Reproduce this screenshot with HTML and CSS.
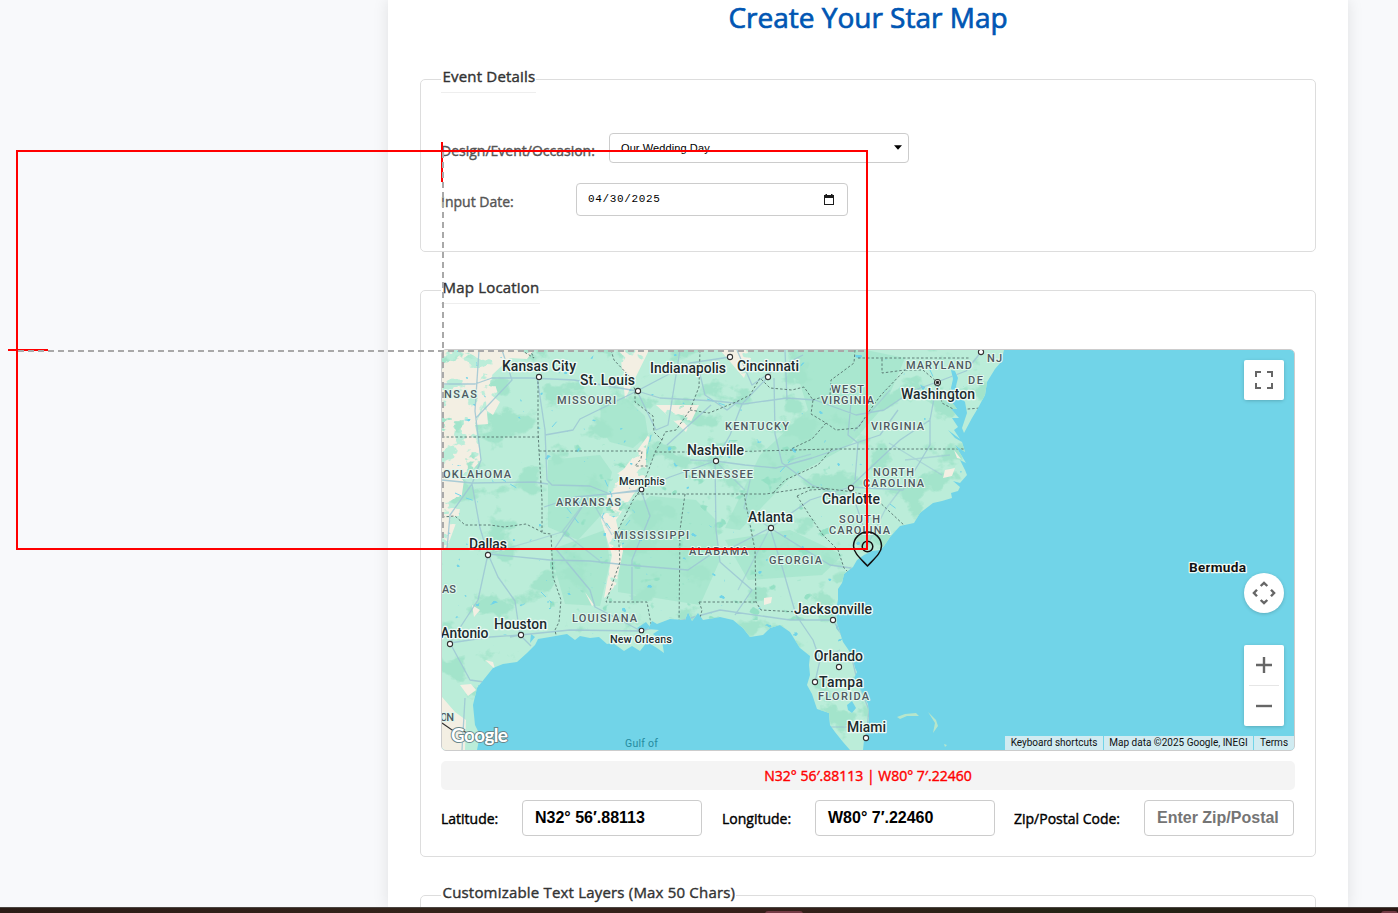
FILE: index.html
```html
<!DOCTYPE html>
<html lang="en">
<head>
<meta charset="utf-8">
<title>Create Your Star Map</title>
<link rel="stylesheet" href="styles.css">
</head>
<body>
<div class="viewport">
<main class="card">
  <h1><span>Create Your Star Map</span></h1>
  <fieldset class="group event">
    <legend class="l-event">Event Details</legend>
    <div class="row row-occasion">
      <label class="t-occasion">Design/Event/Occasion:</label>
      <div class="control select"><span>Our Wedding Day</span><svg width="8" height="5" viewBox="0 0 8 5"><path d="M0 .3H8L4 4.7Z"/></svg></div>
    </div>
    <div class="row row-date">
      <label class="t-date">Input Date:</label>
      <div class="control date"><span>04/30/2025</span><svg width="10" height="11" viewBox="0 0 10 11"><path fill-rule="evenodd" d="M1.5 0H3V1H7V0H8.500V1H10V11H0V1H1.500ZM1 4V10H9V4Z" fill="#1c1c1c"/></svg></div>
    </div>
  </fieldset>
  <fieldset class="group location">
    <legend class="l-map">Map Location</legend>
    <div class="map">
      <svg class="canvas" width="852" height="400" viewBox="442 350 852 400">
        <defs>
          <path id="coast" d="M442 350H1004L1001 362 995 369 987 382 985 395 978 408 972 418 964 433 962 428 967 413 965 402 958 394 956 386 958 378 955 371 951 370 953 379 951 388 953 396 950 400 957 409 951 409 959 418 952 418 958 427 954 430 960 439 948 430 955 438 962 442 965 452 955 445 966 463 960 460 965 470 967 475 960 483 953 481 960 487 958 491 951 493 952 498 942 501 933 503 920 513 914 523 900 526 890 537 884 546 880 550 872 551 864 555 857 560 853 567 844 574 842 583 838 589 838 600 836 610 837 623 843 642 852 655 855 668 857 672 854 678 862 692 868 704 869 716 868 728 864 740 863 750H850L843 742 835 732 830 725 829 713 817 709 812 694 807 685 810 675 809 665 810 656 800 648 790 632 780 625 770 628 763 635 750 637 743 628 733 620 720 617 703 620 698 613 692 621 688 612 685 620 670 619 657 624 652 621 648 629 659 630 653 634 662 641 664 653 657 648 647 642 640 651 632 646 624 651 613 643 607 644 599 637 590 638 580 636 575 640 567 634 550 637 538 639 535 645 527 653 517 662 503 664 493 668 485 678 477 688 473 705 475 725 480 735 477 750H442Z"/>
          <clipPath id="land"><use href="#coast"/></clipPath>
          <clipPath id="plains"><path d="M442 350H534L527 359 510 358 492 375 499 397 484 402 475 424 481 460 464 480 459 515 448 545 442 551ZM620 350H649L625 399ZM656 405H699L686 432ZM652 430 624 469 605 482 601 520 612 555 604 598 615 590 623 551 616 520 646 476 646 450ZM720 350H754L744 378Z"/></clipPath>
          <filter id="woods" x="0" y="0" width="100%" height="100%" color-interpolation-filters="sRGB"><feTurbulence type="fractalNoise" baseFrequency=".027 .034" numOctaves="5" seed="12"/><feColorMatrix values="0 0 0 0 .64  0 0 0 0 .895  0 0 0 0 .795  12 0 0 0 -7"/></filter>
          <filter id="forest" x="0" y="0" width="100%" height="100%" color-interpolation-filters="sRGB"><feTurbulence type="fractalNoise" baseFrequency=".055 .07" numOctaves="3" seed="5"/><feColorMatrix values="0 0 0 0 .58  0 0 0 0 .88  0 0 0 0 .77  14 0 0 0 -9.7"/></filter>
          <filter id="dry" x="0" y="0" width="100%" height="100%" color-interpolation-filters="sRGB"><feTurbulence type="fractalNoise" baseFrequency=".045 .06" numOctaves="4" seed="8"/><feColorMatrix values="0 0 0 0 .953  0 0 0 0 .937  0 0 0 0 .89  22 0 0 0 -9"/></filter>
          <filter id="ponds" x="0" y="0" width="100%" height="100%" color-interpolation-filters="sRGB"><feTurbulence type="fractalNoise" baseFrequency=".11 .13" numOctaves="2" seed="21"/><feColorMatrix values="0 0 0 0 .44  0 0 0 0 .83  0 0 0 0 .91  20 0 0 0 -15.4"/></filter>
        </defs>
        <rect x="442" y="350" width="852" height="400" fill="#71d4e8"/>
        <use href="#coast" fill="#bbedd9"/>
        <g clip-path="url(#land)">
          <path class="wood" d="M601 402 625 397 645 416 648 435 633 448 610 442 600 428ZM548 460 600 455 612 472 602 514 578 540 548 527ZM620 525 650 496 696 500 716 520 720 560 700 605 618 592ZM550 550 605 530 610 562 600 606 565 604ZM790 350H866L905 358 885 405 850 445 790 478 740 530 725 528 760 455 808 410ZM725 540 790 530 843 555 822 575 748 580Z"/>
          <rect x="442" y="350" width="570" height="400" filter="url(#woods)"/>
          <rect x="550" y="440" width="280" height="180" filter="url(#forest)"/>
          <g clip-path="url(#plains)"><rect x="442" y="350" width="420" height="260" filter="url(#dry)"/></g>
          <path class="sand" d="M485 390 500 402 493 415 483 408 475 425 488 424ZM472 605 480 610 474 617ZM485 660 493 662 495 669ZM460 685 471 684 476 690 468 696ZM442 697 455 712 466 720 465 750H442ZM764 598 772 597 771 603 764 605ZM823 712 829 716 827 720ZM945 470 955 468 952 476 943 478ZM954 450 961 459 957 458ZM585 592 594 605 592 606Z"/>
          <rect x="442" y="350" width="530" height="300" filter="url(#ponds)"/>
          <path class="lake" d="M847 705 852 701 856 708 852 713 848 710ZM637 628 646 622 650 627 643 632ZM837 622 839 632 836 628ZM531 634 535 637 530 643ZM478 685 484 689 479 696Z"/>
          <path class="river" d="M455 493 466 498 478 502M500 478 520 490M541 592 552 603M567 508 580 525M605 480 612 496 602 517 615 535M651 435 646 460M707 399 730 407M730 440 720 461M842 597 848 603M858 575 866 582M890 504 898 510M630 520 614 541M552 427 559 419M780 472 790 461M930 370 937 385 949 404"/>
          <path class="road" d="M442 384H475L492 378H530L574 380 608 386 637 391 660 398 715 401 744 404 787 398 815 400 856 415 884 410 912 391 937 382 966 371 981 352M537 377 545 430 547 480 552 485 590 486 610 494 640 490 670 477 715 461 745 465 776 468 812 458 850 445 880 435 898 410M545 435 573 430 580 419 637 391 690 363 730 357M479 350 475 411 481 460 472 484 450 515 447 549M502 350 512 380 476 418M442 480 472 483 534 482 548 484M472 484 480 528 488 554 478 600 450 643 470 680 484 682M488 554 550 560 590 561 627 565 688 570 710 555 727 550 770 528 810 500 850 487 900 440 930 420 937 382M488 554 498 577 515 601 520 635 531 646M450 643 490 637 520 635 570 630 641 631 676 622 720 610 790 620 833 620M588 498 555 548 590 590 595 607 641 631M637 391 656 430 668 425 680 350M641 490 650 516 632 560 632 600M715 461 716 530 720 562 752 590 735 615M768 377 742 404 730 435 715 461M770 528 783 570 796 615 813 640 820 660 815 682M833 620 850 650 857 680 869 710 866 738M770 528 830 565 851 568 844 600 833 620M737 350 752 385 774 370 803 355M850 487 868 540M850 487 903 490 930 445 930 418M851 402 848 435 858 443 855 480M774 378 775 434 782 463 812 485 847 498M667 445 711 405M699 370 705 395 727 410 740 400M510 637 520 635M462 750 465 698M785 350 787 400M640 491 575 497 544 507"/>
          <path class="road soft" d="M488 554 536 540 562 532 588 498M563 532 600 561M590 498 612 535M690 460 715 461 745 490M790 460 811 454M854 431 890 390M900 490 885 510 866 548M905 460 950 455M889 443 942 475M751 476 744 508 770 528 738 590M820 658 840 650M828 727H866"/>
          <path class="state" d="M442 437H539M538 377V430L539 451 542 500 542 533 551 534 553 577 561 600 559 622 555 630 557 640M539 451H642L641 459 635 466 648 466M521 350 534 358 530 350M611 350 614 360 630 377 635 390 635 402 653 416 654 432 662 440 655 452 649 469 641 489 633 500 618 530 620 562 615 576 606 602H647L651 624M655 452H724L830 449H966M637 494H766L812 487 830 489M685 494 680 530 679 625M744 494 755 550 756 602 761 610 836 614M699 602H756M699 602 702 610 699 622M700 350 699 387 690 410 676 430 665 432 662 440M690 410 709 413 736 402 750 395 760 378 770 388 792 390 804 387 813 400 811 414 826 423 812 439 791 449M826 423 836 430 858 428 870 410 881 395 905 370 882 373V358M855 350 854 363 842 372 831 380 830 395 812 400M858 358H970M905 370 923 370 937 382 942 403 955 410 981 408M832 449 818 465 785 480 773 493M797 496 810 516 823 535 838 550 844 568 851 575M797 496 810 490 830 489 846 491 868 495M875 498 905 526M442 517 455 516 465 525 490 525 504 527 526 524 542 532"/>
          <path class="frontier" d="M442 723 452 730 460 730 476 736 481 734"/>
        </g>
        <path d="M897 717 905 714 916 713 919 716 907 716 900 719ZM928 712 936 720 938 726 933 733 935 723ZM944 744 947 745 945 747Z" fill="#b6e6cb"/>
        <g class="state-name">
          <text x="444" y="398" textLength="33">NSAS</text><text x="557" y="404" textLength="59">MISSOURI</text>
          <text x="443" y="478" textLength="68">OKLAHOMA</text><text x="556" y="506" textLength="65">ARKANSAS</text>
          <text x="614" y="539" textLength="75">MISSISSIPPI</text><text x="689" y="555" textLength="59">ALABAMA</text>
          <text x="769" y="564" textLength="53">GEORGIA</text><text x="572" y="622" textLength="65">LOUISIANA</text>
          <text x="683" y="478" textLength="70">TENNESSEE</text><text x="725" y="430" textLength="64">KENTUCKY</text>
          <text x="831" y="393" textLength="33">WEST</text><text x="821" y="404" textLength="53">VIRGINIA</text>
          <text x="871" y="430" textLength="53">VIRGINIA</text><text x="906" y="369" textLength="66">MARYLAND</text>
          <text x="968" y="384" textLength="15">DE</text><text x="987" y="362" textLength="15">NJ</text>
          <text x="873" y="476" textLength="41">NORTH</text><text x="863" y="487" textLength="61">CAROLINA</text>
          <text x="839" y="523" textLength="41">SOUTH</text><text x="829" y="534" textLength="61">CAROLINA</text>
          <text x="818" y="700" textLength="51">FLORIDA</text><text x="442" y="593" textLength="14">AS</text><text x="440" y="721" textLength="14">ON</text>
        </g>
        <g class="city">
          <text x="502" y="371" textLength="74">Kansas City</text><text x="580" y="385" textLength="55">St. Louis</text>
          <text x="650" y="373" textLength="76">Indianapolis</text><text x="737" y="371" textLength="62">Cincinnati</text>
          <text x="901" y="399" textLength="74">Washington</text><text x="687" y="455" textLength="57">Nashville</text>
          <text x="822" y="504" textLength="58">Charlotte</text><text x="748" y="522" textLength="45">Atlanta</text>
          <text x="469" y="549" textLength="38">Dallas</text><text x="494" y="629" textLength="53">Houston</text>
          <text x="440.500" y="638" textLength="48">Antonio</text><text x="794" y="614" textLength="78">Jacksonville</text>
          <text x="814" y="661" textLength="49">Orlando</text><text x="819" y="687" textLength="44">Tampa</text><text x="847" y="732" textLength="39">Miami</text>
          <text class="minor" x="619" y="485" textLength="46">Memphis</text><text class="minor" x="610" y="643" textLength="62">New Orleans</text>
          <text class="island" x="1189" y="572" textLength="57">Bermuda</text>
        </g>
        <text class="gulf" x="625" y="747" textLength="33">Gulf of</text>
        <g class="dot"><circle cx="539" cy="377" r="2.600"/><circle cx="638" cy="391" r="2.600"/><circle cx="730" cy="357" r="2.600"/><circle cx="768" cy="377" r="2.600"/><circle cx="981" cy="352" r="2.600"/><circle cx="716" cy="461" r="2.600"/><circle cx="641.500" cy="489.500" r="2.300"/><circle cx="851" cy="488" r="2.600"/><circle cx="771" cy="528" r="2.600"/><circle cx="488" cy="555" r="2.600"/><circle cx="521" cy="635" r="2.600"/><circle cx="450" cy="644" r="2.600"/><circle cx="641.500" cy="630.500" r="2.300"/><circle cx="833" cy="620" r="2.600"/><circle cx="839" cy="667" r="2.600"/><circle cx="815" cy="682" r="2.600"/><circle cx="866" cy="738" r="2.600"/><circle cx="937.500" cy="382.500" r="3"/><circle cx="937.500" cy="382.500" r="1.200" class="core"/></g>
        <path d="M867.500 566C861 559 853.500 553 853.500 546A14 14 0 0 1 881.500 546C881.500 553 874 559 867.500 566Z" fill="none" stroke="#111" stroke-width="1.500"/>
        <circle cx="867.500" cy="546.500" r="5.300" fill="none" stroke="#111" stroke-width="1.500"/>
        <text class="brand" x="451" y="742" textLength="57">Google</text>
      </svg>
      <div class="btn full"><svg width="18" height="18" viewBox="0 0 18 18"><path d="M1 6V1H6M12 1H17V6M17 12V17H12M6 17H1V12"/></svg></div>
      <div class="btn pan"><svg width="24" height="24" viewBox="0 0 24 24"><path d="M8.700 5 12 1.900 15.300 5M19 8.700 22.100 12 19 15.300M15.300 19 12 22.100 8.700 19M5 15.300 1.900 12 5 8.700"/></svg></div>
      <div class="btn zoom"><svg width="18" height="18" viewBox="0 0 18 18"><path d="M9 1V17M1 9H17"/></svg><i></i><svg width="18" height="18" viewBox="0 0 18 18"><path d="M1 9H17"/></svg></div>
      <div class="credits"><span class="c1">Keyboard shortcuts</span><span class="c2">Map data ©2025 Google, INEGI</span><span class="c3">Terms</span></div>
    </div>
    <div class="coords"><span>N32° 56′.88113 | W80° 7′.22460</span></div>
    <div class="fields">
      <label class="t-lat">Latitude:</label><div class="control value">N32° 56′.88113</div>
      <label class="t-lon">Longitude:</label><div class="control value">W80° 7′.22460</div>
      <label class="t-zip">Zip/Postal Code:</label><div class="control value hint">Enter Zip/Postal</div>
    </div>
  </fieldset>
  <fieldset class="group layers"><legend class="l-layers">Customizable Text Layers (Max 50 Chars)</legend></fieldset>
</main>
<footer class="strip"><i class="blob b1"></i><i class="blob b2"></i></footer>
<svg class="guides" width="1398" height="913" viewBox="0 0 1398 913" fill="none" stroke-width="2">
  <path d="M8 350H48M442 142V182" stroke="#f00"/>
  <path d="M18 351H866M443 152V549" stroke="#a9a9a9" stroke-dasharray="6 4"/>
  <rect x="17" y="151" width="850" height="398" stroke="#f00"/>
</svg>
</div>
</body>
</html>
```
FILE: styles.css
```css
* { box-sizing: border-box; }
body { margin: 0; background: #f8f9fb; font-family: "Open Sans", sans-serif; color: #333; }
.viewport { position: relative; height: 913px; overflow: hidden; display: flex; flex-direction: column; }
.card { width: 960px; height: 907px; flex: none; margin-left: 388px; padding: 0 32px; background: #fff; box-shadow: 0 0 15px rgba(0,0,0,.1); overflow: visible; }
h1 { margin: 0 0 31px; height: 35px; line-height: 35px; font-size: 28px; font-weight: 500; color: #0056b3; text-align: center; white-space: nowrap; -webkit-text-stroke: .7px; }
.group { margin: 0 0 25px; padding: 0 20px; border: 1px solid #ddd; border-radius: 5px; min-width: 0; }
.event { height: 186px; }
.location { height: 580px; }
.layers { height: 60px; margin: 0; }
legend { height: 27px; padding: 0 1px 0 1.500px; border-bottom: 1px solid #eee; font-size: 15px; line-height: 21px; font-weight: 500; letter-spacing: .19px; white-space: nowrap; -webkit-text-stroke: .4px; }
.row { display: flex; align-items: center; color: #555; font-size: 14px; font-weight: 500; white-space: nowrap; }
.row label, .fields label, .coords { -webkit-text-stroke: .4px; }
.row-occasion { margin-top: 40px; height: 30px; }
.row-occasion label { width: 168px; padding-top: 4px; }
.row-date { margin-top: 20px; height: 33px; }
.row-date label { width: 135px; padding-top: 3px; }
.control { display: flex; align-items: center; justify-content: space-between; background: #fff; border: 1px solid #ccc; border-radius: 4px; color: #000; }
.select { width: 300px; height: 30px; padding: 0 6px 1px 11px; font: 11px "Liberation Sans", sans-serif; letter-spacing: .1px; }
.date { width: 272px; height: 33px; padding: 0 13px 0 11px; font: 11px "Liberation Mono", monospace; letter-spacing: .65px; }
.date span { padding-bottom: 1px; }
.map { position: relative; margin-top: 45px; height: 402px; border: 1px solid #ccc; border-radius: 5px; overflow: hidden; font-family: Roboto, sans-serif; }
.canvas { display: block; }
.wood { fill: #a6e5cd; opacity: .85; }
.sand { fill: #f3efe3; }
.lake { fill: #71d4e8; }
.river { fill: none; stroke: #71d4e8; stroke-width: 1; stroke-dasharray: 7 5; }
.road { fill: none; stroke: #9cc6d3; stroke-width: 1.300; stroke-linejoin: round; opacity: .85; }
.soft { opacity: .6; }
.state { fill: none; stroke: #56736e; stroke-width: .9; stroke-dasharray: 2.500 2; }
.frontier { fill: none; stroke: #333; stroke-width: 1.200; }
.state-name text { font-size: 11px; font-weight: 500; fill: #4f5960; stroke: #e0f7ee; stroke-width: 2.200px; paint-order: stroke; stroke-linejoin: round; }
.city text { font-size: 14px; font-weight: 500; fill: #202a2e; stroke: #edfaf5; stroke-width: 2.600px; paint-order: stroke; stroke-linejoin: round; }
.city .minor { font-size: 11px; }
.city .island { font-size: 13.700px; font-weight: 700; fill: #111; }
.gulf { font-size: 10.500px; fill: #258ba0; }
.dot circle { fill: #fff; stroke: #333; stroke-width: 1.100; }
.dot .core { fill: #111; }
.brand { font-family: Lato, sans-serif; font-size: 19px; font-weight: 700; fill: #fff; stroke: #68878a; stroke-width: 2px; paint-order: stroke; }
.btn { position: absolute; right: 10px; width: 40px; height: 40px; display: flex; align-items: center; justify-content: center; background: #fff; border-radius: 2px; box-shadow: 0 1px 4px -1px rgba(0,0,0,.3); }
.btn path { fill: none; stroke: #666; stroke-width: 2; }
.full { top: 10px; }
.pan { top: 223px; border-radius: 50%; }
.pan path { stroke-width: 2.400; }
.zoom { top: 295px; height: 81px; flex-direction: column; gap: 11px; }
.zoom path { stroke-width: 2.400; }
.zoom i { width: 30px; height: 1px; background: #e6e6e6; }
.credits { position: absolute; right: 0; bottom: 0; display: flex; gap: 1px; height: 14px; font-size: 10px; line-height: 14px; color: #111; white-space: nowrap; }
.credits span { background: #d0ebf1; text-align: center; }
.c1 { width: 98px; }
.c2 { width: 149px; }
.c3 { width: 40px; }
.coords { margin-top: 10px; height: 29px; border-radius: 5px; background: #f4f4f4; text-align: center; color: #f00; font-size: 14px; line-height: 29px; font-weight: 500; }
.fields { display: grid; grid-template-columns: 81px 180px 20px 93px 180px 19px 130px 150px; margin-top: 10px; height: 36px; align-items: center; white-space: nowrap; color: #000; font-size: 14px; font-weight: 500; }
.fields label { padding-top: 1px; }
.t-lon { grid-column: 4; }
.t-zip { grid-column: 7; }
.value { height: 36px; padding: 0 12px; font: bold 16px "Liberation Sans", sans-serif; }
.hint { color: #757575; }
.strip { position: relative; flex: none; height: 6px; border-top: 1px solid #4a4541; background: linear-gradient(90deg, #2b1c16, #33231a 30%, #35201a 55%, #222414 80%, #2b1714); }
.blob { position: absolute; top: 3px; height: 3px; border-radius: 4px 4px 0 0; background: #743c46; }
.b1 { left: 765px; width: 38px; }
.b2 { left: 1381px; width: 17px; }
.guides { position: absolute; left: 0; top: 0; pointer-events: none; }
```
